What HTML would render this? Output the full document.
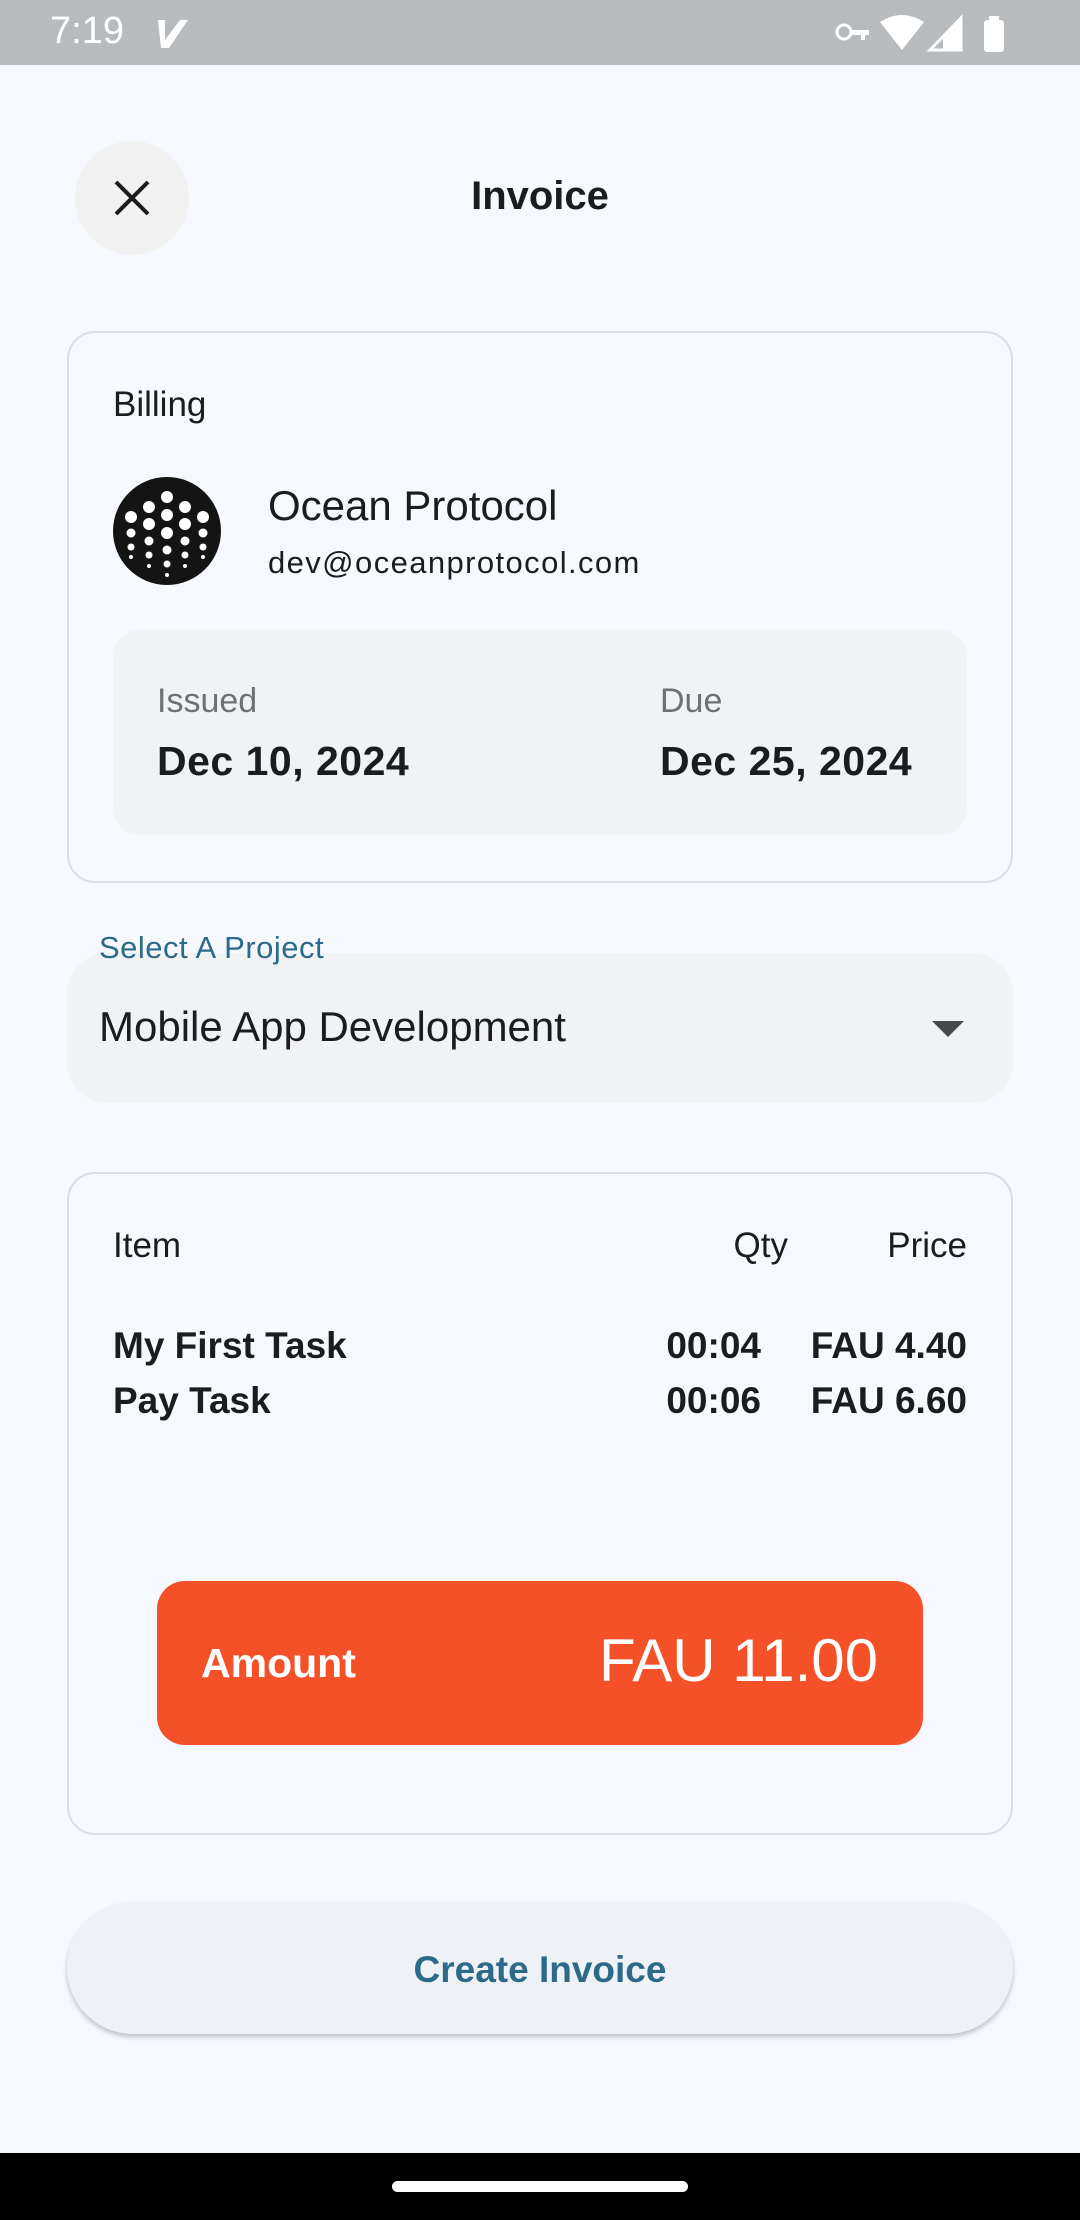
<!DOCTYPE html>
<html><head><meta charset="utf-8"><style>
*{margin:0;padding:0;box-sizing:border-box}
body{width:1080px;height:2220px;background:#f5f8fd;font-family:"Liberation Sans",sans-serif;color:#1a1c1e;position:relative;overflow:hidden}
.a{position:absolute}
.sb{left:0;top:0;width:1080px;height:65px;background:#b8bbbe}
.card{border:2px solid #d9dde2;border-radius:28px;left:67px;width:946px}
.b{font-weight:bold}
</style></head><body>
<div class="a sb"></div>
<div class="a" style="left:50px;top:10px;font-size:38px;color:#fff">7:19</div>
<svg class="a" style="left:155px;top:18px" width="36" height="32"><path d="M3 2h7v20L25 2h8L14 30H6z" fill="#fff"/></svg>
<svg class="a" style="left:830px;top:14px" width="220" height="40"><circle cx="14" cy="18" r="7" fill="none" stroke="#fff" stroke-width="3"/><path d="M21 16h18v5h-4v5h-4v-5h-10z" fill="#fff"/><path d="M50 8q22-14 44 0L72 36z" fill="#fff"/><path d="M100 36L131 4v32z" fill="none" stroke="#fff" stroke-width="3"/><path d="M113 22L131 4v32h-18z" fill="#fff"/><rect x="154" y="6" width="20" height="32" rx="3" fill="#fff"/><rect x="159" y="2" width="10" height="6" fill="#fff"/></svg>

<div class="a" style="left:75px;top:141px;width:114px;height:114px;border-radius:50%;background:#f1f1f1"></div>
<svg class="a" style="left:112px;top:178px" width="40" height="40"><path d="M4 4L36 36M36 4L4 36" stroke="#1a1c1e" stroke-width="4"/></svg>
<div class="a b" style="left:0;width:1080px;text-align:center;top:174px;font-size:40px">Invoice</div>

<div class="a card" style="top:331px;height:552px"></div>
<div class="a" style="left:113px;top:385px;font-size:35px">Billing</div>
<svg class="a" style="left:113px;top:477px" width="108" height="108"><circle cx="54" cy="54" r="54" fill="#141414"/>
<g fill="#fff">
<circle cx="54" cy="20" r="6"/><circle cx="54" cy="38" r="6"/><circle cx="54" cy="56" r="6"/><circle cx="54" cy="73" r="4.5"/><circle cx="54" cy="87" r="3.5"/><circle cx="54" cy="98" r="2"/>
<circle cx="36" cy="30" r="6"/><circle cx="36" cy="47" r="6"/><circle cx="36" cy="64" r="4.5"/><circle cx="36" cy="78" r="3.5"/><circle cx="36" cy="89" r="2"/>
<circle cx="72" cy="30" r="6"/><circle cx="72" cy="47" r="6"/><circle cx="72" cy="64" r="4.5"/><circle cx="72" cy="78" r="3.5"/><circle cx="72" cy="89" r="2"/>
<circle cx="18" cy="40" r="6"/><circle cx="18" cy="56" r="4.5"/><circle cx="18" cy="70" r="3.5"/><circle cx="18" cy="80" r="2"/>
<circle cx="90" cy="40" r="6"/><circle cx="90" cy="56" r="4.5"/><circle cx="90" cy="70" r="3.5"/><circle cx="90" cy="80" r="2"/>
</g></svg>
<div class="a" style="left:268px;top:482px;font-size:42px">Ocean Protocol</div>
<div class="a" style="left:268px;top:545px;font-size:31px;letter-spacing:1.4px">dev@oceanprotocol.com</div>
<div class="a" style="left:113px;top:630px;width:854px;height:205px;background:#eff3f5;border-radius:26px"></div>
<div class="a" style="left:157px;top:682px;font-size:34px;color:#6d7175">Issued</div>
<div class="a b" style="left:157px;top:738px;font-size:41px;letter-spacing:0.5px">Dec 10, 2024</div>
<div class="a" style="left:660px;top:682px;font-size:34px;color:#6d7175">Due</div>
<div class="a b" style="left:660px;top:738px;font-size:41px;letter-spacing:0.5px">Dec 25, 2024</div>

<div class="a" style="left:67px;top:953px;width:946px;height:150px;background:#f1f2f4;border-radius:40px"></div>
<div class="a" style="left:99px;top:930px;font-size:31px;color:#2d6a8a;letter-spacing:0.5px">Select A Project</div>
<div class="a" style="left:99px;top:1003px;font-size:42px">Mobile App Development</div>
<svg class="a" style="left:932px;top:1021px" width="32" height="16"><path d="M0 0h32L16 16z" fill="#45484c"/></svg>

<div class="a card" style="top:1172px;height:663px"></div>
<div class="a" style="left:113px;top:1226px;font-size:35px">Item</div>
<div class="a" style="left:600px;width:188px;text-align:right;top:1226px;font-size:35px">Qty</div>
<div class="a" style="left:800px;width:167px;text-align:right;top:1226px;font-size:35px">Price</div>
<div class="a b" style="left:113px;top:1318px;font-size:37px;line-height:55px">My First Task<br>Pay Task</div>
<div class="a b" style="left:600px;width:161px;text-align:right;top:1318px;font-size:37px;line-height:55px">00:04<br>00:06</div>
<div class="a b" style="left:780px;width:187px;text-align:right;top:1318px;font-size:37px;line-height:55px">FAU 4.40<br>FAU 6.60</div>
<div class="a" style="left:157px;top:1581px;width:766px;height:164px;background:#f55128;border-radius:28px"></div>
<div class="a b" style="left:201px;top:1640px;font-size:41px;color:#fff">Amount</div>
<div class="a" style="left:500px;width:378px;text-align:right;top:1626px;font-size:60px;color:#fff">FAU 11.00</div>

<div class="a" style="left:67px;top:1902px;width:946px;height:132px;background:#eef1f5;border-radius:66px;box-shadow:0 3px 5px rgba(0,0,0,0.22)"></div>
<div class="a b" style="left:0;width:1080px;text-align:center;top:1949px;font-size:37px;color:#2d6a8a">Create Invoice</div>

<div class="a" style="left:0;top:2153px;width:1080px;height:67px;background:#000"></div>
<div class="a" style="left:392px;top:2181px;width:296px;height:11px;border-radius:6px;background:#fff"></div>
</body></html>
